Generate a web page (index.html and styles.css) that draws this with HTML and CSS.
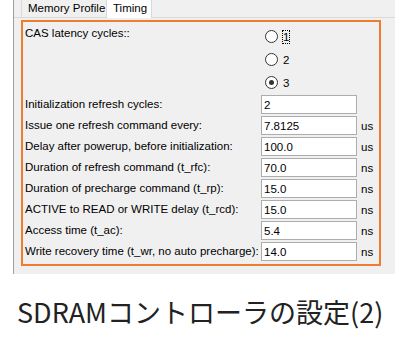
FILE: index.html
```html
<!DOCTYPE html>
<html lang="ja">
<head>
    <meta charset="UTF-8">
    <meta name="viewport" content="width=device-width, initial-scale=1.0">
    <title>SDRAM Timing</title>
    <link rel="stylesheet" href="styles.css">
</head>
<body>

<div class="window">
    <div class="tabs">
        <div class="tab">Memory Profile</div>
        <div class="tab active">Timing</div>
    </div>

    <div class="page">
        <div class="highlight">
            <div class="grid">
                <div class="label cas">CAS latency cycles::</div>
                <div class="radios">
                    <label class="radio"><span class="dot"></span><span class="focus">1</span></label>
                    <label class="radio"><span class="dot"></span><span>2</span></label>
                    <label class="radio"><span class="dot checked"></span><span>3</span></label>
                </div>
                <div></div>

                <div class="label">Initialization refresh cycles:</div>
                <div class="field"><input type="text" value="2"></div>
                <div class="unit"></div>

                <div class="label">Issue one refresh command every:</div>
                <div class="field"><input type="text" value="7.8125"></div>
                <div class="unit">us</div>

                <div class="label">Delay after powerup, before initialization:</div>
                <div class="field"><input type="text" value="100.0"></div>
                <div class="unit">us</div>

                <div class="label">Duration of refresh command (t_rfc):</div>
                <div class="field"><input type="text" value="70.0"></div>
                <div class="unit">ns</div>

                <div class="label">Duration of precharge command (t_rp):</div>
                <div class="field"><input type="text" value="15.0"></div>
                <div class="unit">ns</div>

                <div class="label">ACTIVE to READ or WRITE delay (t_rcd):</div>
                <div class="field"><input type="text" value="15.0"></div>
                <div class="unit">ns</div>

                <div class="label">Access time (t_ac):</div>
                <div class="field"><input type="text" value="5.4"></div>
                <div class="unit">ns</div>

                <div class="label">Write recovery time (t_wr, no auto precharge):</div>
                <div class="field"><input type="text" value="14.0"></div>
                <div class="unit">ns</div>
            </div>
        </div>
    </div>
</div>

<p class="caption">SDRAMコントローラの設定(2)</p>

</body>
</html>
```

FILE: styles.css
```css
body {
    margin: 0;
    background: #fff;
    font-family: "Liberation Sans", Arial, sans-serif;
    font-size: 11.5px;
    color: #000;
}

.window {
    margin-left: 13px;
    width: 381px;
    height: 274px;
    background: #f0f0f0;
    border-left: 1px solid #a0a0a0;
}

/* tab strip */
.tabs {
    display: flex;
    height: 17px;
    padding-left: 7px;
    border-bottom: 1px solid #d9d9d9;
}
.tab {
    width: 86px;
    padding-left: 6px;
    line-height: 17px;
    white-space: nowrap;
    border: 1px solid #d9d9d9;
    border-top: none;
    border-bottom: none;
    box-sizing: border-box;
}
.tab.active {
    width: 45px;
    height: 18px;
    margin-bottom: -1px;
    background: #fff;
    border-left: none;
}

.page {
    padding: 2px 0 0 7px;
}

/* orange marker box */
.highlight {
    width: 360px;
    height: 246px;
    box-sizing: border-box;
    border: 2px solid #ee7d31;
    padding: 3px 0 0 2px;
}

.grid {
    display: grid;
    grid-template-columns: 232px 96px 20px;
    grid-template-rows: 69px;
    grid-auto-rows: 21px;
    column-gap: 4px;
}
.label {
    line-height: 21px;
    white-space: nowrap;
}
.label.cas {
    line-height: 17px;
}
.radios {
    padding-left: 4px;
}
.radio {
    display: flex;
    align-items: center;
    height: 23px;
    gap: 5px;
}
.dot {
    width: 11px;
    height: 11px;
    border: 1px solid #333;
    border-radius: 50%;
    background: #fff;
    position: relative;
}
.dot.checked::after {
    content: "";
    position: absolute;
    left: 3px;
    top: 3px;
    width: 5px;
    height: 5px;
    border-radius: 50%;
    background: #333;
}
.focus {
    outline: 1px dotted #000;
}

.field input {
    display: block;
    margin-top: 1px;
    width: 96px;
    height: 19px;
    box-sizing: border-box;
    border: 1px solid #adadad;
    padding: 0 2px;
    font-family: "Liberation Sans", Arial, sans-serif;
    font-size: 11.5px;
    background: #fff;
    outline: none;
}
.unit {
    line-height: 23px;
}

.caption {
    margin: 18px 0 0 17px;
    font-family: "Noto Sans CJK JP", "Noto Sans", sans-serif;
    font-size: 27px;
    color: #222;
}
```
